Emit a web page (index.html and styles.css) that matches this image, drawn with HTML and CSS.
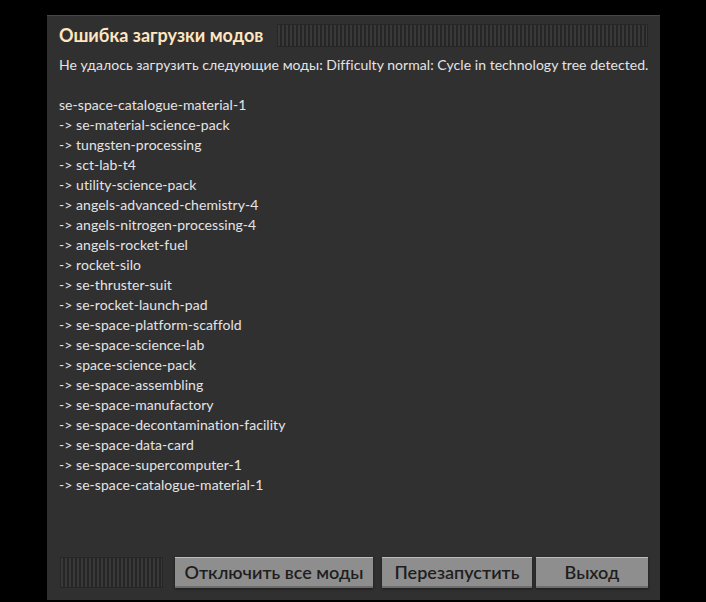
FILE: index.html
```html
<!DOCTYPE html>
<html lang="ru">
<head>
<meta charset="utf-8">
<link rel="stylesheet" href="styles.css">
</head>
<body>
<div class="dialog">
  <div class="header">
    <h1 class="title">Ошибка загрузки модов</h1>
    <div class="drag"></div>
  </div>
  <div class="content">
    <p class="line">Не удалось загрузить следующие моды: Difficulty normal: Cycle in technology tree detected.</p>
    <p class="line">&nbsp;</p>
    <p class="line">se-space-catalogue-material-1</p>
    <p class="line">-&gt; se-material-science-pack</p>
    <p class="line">-&gt; tungsten-processing</p>
    <p class="line">-&gt; sct-lab-t4</p>
    <p class="line">-&gt; utility-science-pack</p>
    <p class="line">-&gt; angels-advanced-chemistry-4</p>
    <p class="line">-&gt; angels-nitrogen-processing-4</p>
    <p class="line">-&gt; angels-rocket-fuel</p>
    <p class="line">-&gt; rocket-silo</p>
    <p class="line">-&gt; se-thruster-suit</p>
    <p class="line">-&gt; se-rocket-launch-pad</p>
    <p class="line">-&gt; se-space-platform-scaffold</p>
    <p class="line">-&gt; se-space-science-lab</p>
    <p class="line">-&gt; space-science-pack</p>
    <p class="line">-&gt; se-space-assembling</p>
    <p class="line">-&gt; se-space-manufactory</p>
    <p class="line">-&gt; se-space-decontamination-facility</p>
    <p class="line">-&gt; se-space-data-card</p>
    <p class="line">-&gt; se-space-supercomputer-1</p>
    <p class="line">-&gt; se-space-catalogue-material-1</p>
  </div>
  <div class="footer">
    <div class="drag drag-footer"></div>
    <button class="btn btn-disable">Отключить все моды</button>
    <button class="btn btn-restart">Перезапустить</button>
    <button class="btn btn-exit">Выход</button>
  </div>
</div>
</body>
</html>
```
FILE: styles.css
```css
html, body {
  margin: 0;
  padding: 0;
  background: #000;
  width: 706px;
  height: 602px;
  overflow: hidden;
}
body {
  font-family: Lato, "Noto Sans", sans-serif;
}
.dialog {
  margin: 15px 0 0 47px;
  width: 613px;
  height: 585px;
  box-sizing: border-box;
  background: #313031;
  border-top: 1px solid #474647;
  padding: 7px 12px 12px 12px;
  display: flex;
  flex-direction: column;
}
.header {
  display: flex;
  align-items: center;
  height: 24px;
  gap: 14px;
}
.title {
  margin: 0;
  font-size: 18px;
  font-weight: 700;
  color: #ffe6c0;
  line-height: 24px;
  white-space: nowrap;
}
.drag {
  flex: 1;
  height: 23px;
  box-sizing: border-box;
  border: 1px solid #262626;
  background: repeating-linear-gradient(90deg, #3a393a 0 2px, #262626 2px 4px);
}
.content {
  flex: 1;
  padding-top: 8px;
}
.line {
  margin: 0;
  font-size: 14px;
  line-height: 20px;
  color: #e4e4e4;
  white-space: nowrap;
  letter-spacing: 0.05px;
}
.footer {
  display: flex;
  align-items: center;
  height: 31px;
  padding-left: 1px;
}
.drag-footer {
  flex: 0 0 103px;
  height: 31px;
  margin-right: 12px;
}
.btn {
  height: 31px;
  box-sizing: border-box;
  border: none;
  background: #8e8e8e;
  color: #1e1e1e;
  font-family: Lato, "Noto Sans", sans-serif;
  font-size: 18px;
  font-weight: 600;
  padding: 0 0 2px 0;
  box-shadow: inset 0 1px 0 #bdbdbd, inset 0 -2px 0 #6e6e6e, 0 1px 2px #1a1a1a;
}
.btn-disable { width: 198px; margin-right: 9px; }
.btn-restart { width: 150px; margin-right: 4px; }
.btn-exit { width: 112px; }
```
